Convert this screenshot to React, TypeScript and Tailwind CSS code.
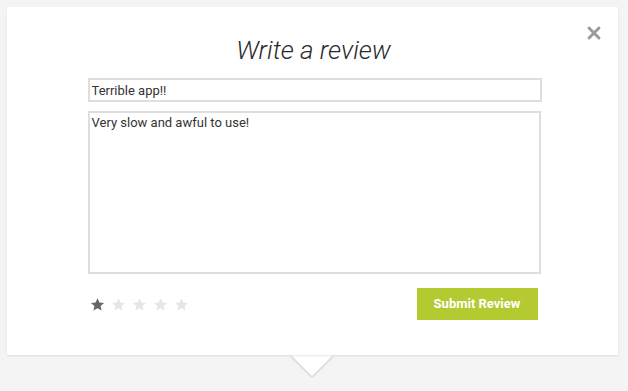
import { X } from "lucide-react";

function Star({ filled }: { filled: boolean }) {
  return (
    <svg viewBox="0 0 24 24" className="h-[15px] w-[15px]" aria-hidden="true">
      <path
        d="M12 1.8l3.1 7 7.4.6-5.6 4.9 1.7 7.4L12 17.8l-6.6 3.9 1.7-7.4L1.5 9.4l7.4-.6z"
        fill={filled ? "#666666" : "#e6e6e6"}
      />
    </svg>
  );
}

export default function App() {
  const rating = 1;

  return (
    <div className="h-[391px] w-full bg-[#f4f4f4] px-[7px] pt-[7px] font-['Roboto',sans-serif]">
      <div className="relative w-[611px]">
        <div className="absolute bottom-[-15px] left-[290px] h-[30px] w-[30px] rotate-45 bg-white shadow-[1px_1px_2px_rgba(0,0,0,0.15)]" />
        <section className="relative flex h-[348px] flex-col items-center bg-white pt-[28px] shadow-[0_1px_2px_rgba(0,0,0,0.1)]">
          <button
            type="button"
            aria-label="Close"
            className="absolute right-[14px] top-[16px] flex h-[20px] w-[20px] items-center justify-center text-[#9a9a9a]"
          >
            <X size={20} strokeWidth={3.5} />
          </button>

          <h2 className="ml-[2px] text-[26px] font-light italic leading-[30px] text-[#2a2a2a]">Write a review</h2>

          <form className="ml-[4px] mt-[13px] flex w-[454px] flex-col" onSubmit={(e) => e.preventDefault()}>
            <input
              type="text"
              defaultValue="Terrible app!!"
              className="h-[24px] w-full border-2 border-[#dedede] px-[2px] text-[13px] text-[#333] outline-none"
            />
            <textarea
              defaultValue="Very slow and awful to use!"
              className="mt-[9px] h-[163px] w-[453px] resize-none border-2 border-[#dedede] px-[2px] pt-[2px] text-[13px] leading-[16px] text-[#333] outline-none"
            />

            <div className="mt-[14px] flex items-center justify-between">
              <div className="ml-[2px] flex gap-[6px]">
                {[1, 2, 3, 4, 5].map((n) => (
                  <Star key={n} filled={n <= rating} />
                ))}
              </div>
              <button
                type="submit"
                className="mr-[4px] h-[32px] w-[121px] bg-[#b5c931] text-[13px] font-bold text-white"
              >
                Submit Review
              </button>
            </div>
          </form>
        </section>
      </div>
    </div>
  );
}
